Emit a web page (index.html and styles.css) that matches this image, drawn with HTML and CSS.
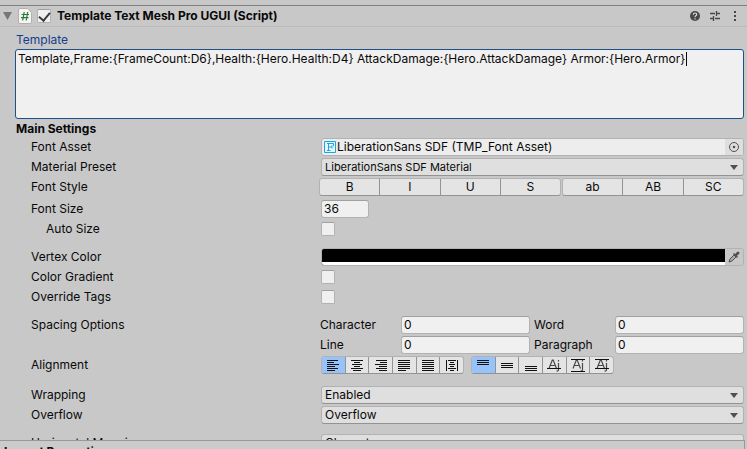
FILE: index.html
```html
<!DOCTYPE html>
<html lang="en">
<head>
<meta charset="utf-8">
<title>Inspector</title>
<link rel="stylesheet" href="styles.css">
</head>
<body>
<svg class="defs" aria-hidden="true">
  <symbol id="arrow" viewBox="0 0 8 5"><path d="M0 0h8L4 5z" fill="#505050"/></symbol>
  <symbol id="aj" viewBox="0 0 14 13"><g fill="none" stroke="#484848" stroke-width="1.2"><path d="M2 9.500L5.300 1h.9L9.500 9.500M3.200 6.500h5M11.500 4v6.500q0 1.800-2 1.500M11.500 1v1.500"/></g></symbol>
</svg>
<main class="inspector">
  <header class="head">
    <svg class="fold" viewBox="0 0 9 8"><path d="M0 0h9L4.500 8z" fill="#777"/></svg>
    <svg class="script" viewBox="0 0 14 16"><path d="M2 .5h7.500l4 4V14q0 1.500-1.500 1.500H2Q.5 15.500.5 14V2Q.5.500 2 .5z" fill="#f5f5f5" stroke="#b0b0b0"/><path d="M6.200 4L4.700 12.500M9.700 4L8.200 12.500M3.500 6.500h7.500M3 9.700h7.500" stroke="#2e7d32" stroke-width="1.200" fill="none"/></svg>
    <input class="check" type="checkbox" checked aria-label="Enabled">
    <h1>Template Text Mesh Pro UGUI (Script)</h1>
    <button class="icon" aria-label="Help"><svg viewBox="0 0 12 12"><circle cx="6" cy="6" r="5" fill="#484848"/><path d="M4.300 4.700q0-1.700 1.700-1.700t1.700 1.500q0 .8-.9 1.300T6 7.200M6 8.200v1.200" fill="none" stroke="#ddd" stroke-width="1.200"/></svg></button>
    <button class="icon" aria-label="Presets"><svg viewBox="0 0 12 12"><path d="M1 3.500h5M8 3.500h3M7.500 1v5M1 8.500h3M6 8.500h5M4.500 6v5" fill="none" stroke="#484848" stroke-width="1.300"/></svg></button>
    <button class="icon" aria-label="More"><svg viewBox="0 0 12 12"><path d="M5 1h2v2H5zM5 5h2v2H5zM5 9h2v2H5z" fill="#484848"/></svg></button>
  </header>
  <div class="body">
    <label class="template-label" for="template">Template</label>
    <div class="template-box">
      <textarea id="template" spellcheck="false">Template,Frame:{FrameCount:D6},Health:{Hero.Health:D4} AttackDamage:{Hero.AttackDamage} Armor:{Hero.Armor}</textarea>
      <span class="caret"></span>
    </div>
    <h2>Main Settings</h2>
    <div class="row">
      <label for="asset">Font Asset</label>
      <div class="field object">
        <svg class="f-icon" viewBox="0 0 12 12"><path d="M.5.500h11v11H.5z" fill="#e8f6fc" stroke="#19a7e0"/><path d="M3 9.500h3.500M3 2.500h6.500V5M4.500 2.500v7M5 6h3M8 4.500v3" fill="none" stroke="#19a7e0"/></svg>
        <input id="asset" value="LiberationSans SDF (TMP_Font Asset)" readonly>
        <button class="pick" aria-label="Select font asset"><svg viewBox="0 0 12 12"><circle cx="6" cy="6" r="4.500" fill="none" stroke="#505050"/><circle cx="6" cy="6" r="1.300" fill="#505050"/></svg></button>
      </div>
    </div>
    <div class="row">
      <label for="material">Material Preset</label>
      <div class="field drop small"><select id="material"><option>LiberationSans SDF Material</option></select><svg><use href="#arrow"/></svg></div>
    </div>
    <div class="row style-row">
      <span class="name">Font Style</span>
      <div class="field styles">
        <div class="group four"><button>B</button><button>I</button><button>U</button><button>S</button></div>
        <div class="group three"><button>ab</button><button>AB</button><button>SC</button></div>
      </div>
    </div>
    <div class="row">
      <label for="size">Font Size</label>
      <div class="field"><input id="size" class="text short" value="36"></div>
    </div>
    <div class="row end">
      <label class="sub" for="auto">Auto Size</label>
      <div class="field"><input class="check" id="auto" type="checkbox"></div>
    </div>
    <div class="row">
      <label for="color">Vertex Color</label>
      <div class="field color">
        <button id="color" class="swatch" aria-label="Vertex Color"></button>
        <button class="pick" aria-label="Pick color"><svg viewBox="0 0 12 12"><path d="M1 11l1-3 4-4 2 2-4 4z" fill="#aaa" stroke="#505050"/><path d="M5 3l1-1 1.300 1L9 1q1-1 2 0t0 2L9 4.800 10 6 9 7z" fill="#505050"/></svg></button>
      </div>
    </div>
    <div class="row">
      <label for="gradient">Color Gradient</label>
      <div class="field"><input class="check" id="gradient" type="checkbox"></div>
    </div>
    <div class="row end">
      <label for="override">Override Tags</label>
      <div class="field"><input class="check" id="override" type="checkbox"></div>
    </div>
    <div class="row">
      <span class="name">Spacing Options</span>
      <div class="field pair">
        <label for="char">Character</label><input id="char" class="text" value="0">
        <label for="word">Word</label><input id="word" class="text" value="0">
      </div>
    </div>
    <div class="row">
      <span class="name"></span>
      <div class="field pair">
        <label for="line">Line</label><input id="line" class="text" value="0">
        <label for="para">Paragraph</label><input id="para" class="text" value="0">
      </div>
    </div>
    <div class="row align-row">
      <span class="name">Alignment</span>
      <div class="field aligns">
        <div class="group">
          <button class="on" aria-label="Left"><svg viewBox="0 0 14 13"><path d="M1 1.500h11M1 3.500h7M1 5.500h12M1 7.500h8M1 9.500h11M1 11.500h8"/></svg></button>
          <button aria-label="Center"><svg viewBox="0 0 14 13"><path d="M1 1.500h12M4 3.500h6M2 5.500h10M4 7.500h6M1 9.500h12M3 11.500h8"/></svg></button>
          <button aria-label="Right"><svg viewBox="0 0 14 13"><path d="M2 1.500h11M6 3.500h7M1 5.500h12M5 7.500h8M2 9.500h11M5 11.500h8"/></svg></button>
          <button aria-label="Justified"><svg viewBox="0 0 14 13"><path d="M1 1.500h12M1 3.500h12M1 5.500h12M1 7.500h12M1 9.500h12M1 11.500h8"/></svg></button>
          <button aria-label="Flush"><svg viewBox="0 0 14 13"><path d="M1 1.500h12M1 3.500h12M1 5.500h12M1 7.500h12M1 9.500h12M1 11.500h12"/></svg></button>
          <button aria-label="Geometry center"><svg viewBox="0 0 14 13"><path d="M1.500 1v11M12.500 1v11M3 1.500h8M5 3.500h4M4 5.500h6M5 7.500h4M3 9.500h8M5 11.500h4"/></svg></button>
        </div>
        <div class="group">
          <button class="on" aria-label="Top"><svg viewBox="0 0 14 13"><path d="M1 1.500h12M1 3.500h12M1 5.500h12"/></svg></button>
          <button aria-label="Middle"><svg viewBox="0 0 14 13"><path d="M1 4.500h12M1 6.500h12M1 8.500h12"/></svg></button>
          <button aria-label="Bottom"><svg viewBox="0 0 14 13"><path d="M1 7.500h12M1 9.500h12M1 11.500h12"/></svg></button>
          <button aria-label="Baseline"><svg viewBox="0 0 14 13"><use href="#aj"/><path d="M0 9.500h14"/></svg></button>
          <button aria-label="Midline"><svg viewBox="0 0 14 13"><use href="#aj"/><path d="M0 .5h14M0 12.500h14"/></svg></button>
          <button aria-label="Capline"><svg viewBox="0 0 14 13"><use href="#aj"/><path d="M0 .5h14M0 9.500h14"/></svg></button>
        </div>
      </div>
    </div>
    <div class="row">
      <label for="wrap">Wrapping</label>
      <div class="field drop"><select id="wrap"><option>Enabled</option></select><svg><use href="#arrow"/></svg></div>
    </div>
    <div class="row end">
      <label for="over">Overflow</label>
      <div class="field drop"><select id="over"><option>Overflow</option></select><svg><use href="#arrow"/></svg></div>
    </div>
    <div class="row">
      <label for="hmap">Horizontal Mapping</label>
      <div class="field drop"><select id="hmap"><option>Character</option></select><svg><use href="#arrow"/></svg></div>
    </div>
  </div>
</main>
<footer class="preview"><h2>Layout Properties</h2></footer>
</body>
</html>
```
FILE: styles.css
```css
* { box-sizing: border-box; }

body {
  margin: 0;
  height: 100vh;
  display: flex;
  flex-direction: column;
  overflow: hidden;
  background: #c8c8c8;
  color: #090909;
  font: 12px/18px Inter, "Liberation Sans", sans-serif;
}

button, input, select, textarea { font: inherit; color: inherit; margin: 0; padding: 0; border: 0; }
button { background: none; }
svg { display: block; }
.defs { position: absolute; width: 0; height: 0; }
h1, h2 { margin: 0; font-size: 12px; font-weight: 700; }

.inspector { flex: 1; min-height: 0; overflow: hidden; padding-top: 5px; }

.head {
  display: flex;
  align-items: center;
  height: 22px;
  padding: 0 6px 0 3px;
  border-top: 1px solid #7f7f7f;
  border-bottom: 1px solid #bababa;
}
.fold { width: 9px; height: 8px; }
.script { width: 14px; height: 16px; margin: 0 5px 0 6px; }
.head h1 { flex: 1; margin-left: 6px; }
.icon { width: 12px; height: 12px; margin-left: 8px; }
.icon svg { width: 12px; height: 12px; }

.check {
  appearance: none;
  display: block;
  width: 14px;
  height: 14px;
  margin: 2px 0;
  background: #f0f0f0;
  border: 1px solid #b2b2b2;
  border-top-color: #a0a0a0;
  border-radius: 2px;
}
.check:checked::after {
  content: "";
  display: block;
  width: 5px;
  height: 9px;
  margin: 0 auto;
  border: solid #3c3c3c;
  border-width: 0 2px 2px 0;
  transform: rotate(40deg);
}

.body { padding: 4px 3px 0 15px; }
.template-label { display: block; padding-left: 1px; color: #15418c; }
.template-box {
  position: relative;
  height: 70px;
  margin-bottom: 1px;
  background: #f0f0f0;
  border: 1px solid #1d5087;
  border-radius: 3px;
}
textarea {
  display: block;
  width: 100%;
  height: 100%;
  padding: 0 2px;
  background: none;
  outline: 0;
  resize: none;
}
.caret {
  position: absolute;
  top: 2px;
  left: 670px;
  width: 1px;
  height: 14px;
  background: #090909;
}
.body h2 { padding-left: 1px; }

.row { display: flex; height: 18px; margin-bottom: 2px; padding-left: 16px; }
.row.end { margin-bottom: 10px; }
.align-row { margin-bottom: 12px; }
.style-row { margin-bottom: 4px; }
.row > label, .name { flex: 0 0 290px; }
.row > .sub { padding-left: 15px; }
.field { flex: 1; min-width: 0; }

.text, .object, .drop, .color {
  border: 1px solid #b2b2b2;
  border-radius: 3px;
}
.text {
  height: 18px;
  width: 100%;
  padding: 0 2px;
  background: #f0f0f0;
  border-top-color: #a0a0a0;
}
.short { display: block; width: 48px; }

.object, .color { display: flex; overflow: hidden; }
.object { background: #ededed; }
.object input { flex: 1; background: none; line-height: 16px; }
.f-icon { width: 12px; height: 12px; margin: 2px 1px 0 2px; }
.pick { display: flex; align-items: center; justify-content: center; width: 18px; background: #dedede; }
.pick svg { width: 12px; height: 12px; }
.color .pick { background: #c8c8c8; }
.swatch { flex: 1; background: #000; border-bottom: 3px solid #fff; }

.drop {
  display: flex;
  align-items: center;
  padding-right: 5px;
  background: #dfdfdf;
  border-bottom-color: #939393;
}
.drop select {
  flex: 1;
  appearance: none;
  padding-left: 3px;
  height: 16px;
  line-height: 16px;
  background: none;
}
.drop svg { width: 8px; height: 5px; }
.small { font-size: 11px; }

.styles { display: flex; gap: 1px; margin-left: -2px; }
.four { flex: 4; }
.three { flex: 3; }
.group {
  display: flex;
  height: 18px;
  background: #e4e4e4;
  border: 1px solid #b2b2b2;
  border-bottom-color: #939393;
  border-radius: 3px;
  overflow: hidden;
}
.group button { flex: 1; line-height: 16px; }
.group button + button { border-left: 1px solid #939393; }
.aligns { display: flex; gap: 7px; }
.aligns .group { width: 143px; }
.aligns button { display: flex; align-items: center; justify-content: center; }
.aligns svg { width: 14px; height: 13px; fill: none; stroke: #111; }
.group .on { background: #96c3fb; }

.pair {
  display: grid;
  grid-template-columns: 77px 1fr 77px 1fr;
  column-gap: 4px;
  margin-left: -1px;
}

.preview {
  height: 9px;
  margin-right: 2px;
  overflow: hidden;
  background: #cbcbcb;
  border-top: 1px solid #999;
  border-right: 1px solid #999;
}
.preview h2 { padding: 2px 0 0 4px; }
```
